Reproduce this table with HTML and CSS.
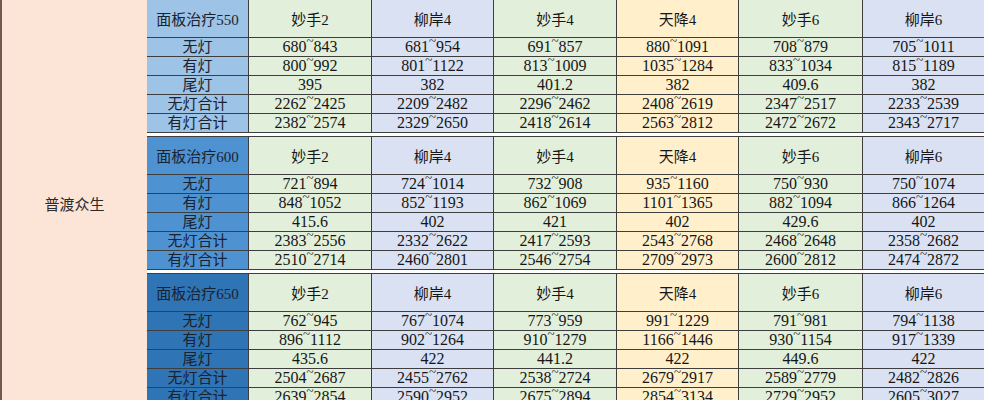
FILE: index.html
```html
<!DOCTYPE html>
<html lang="zh-CN">
<head>
<meta charset="utf-8">
<title>普渡众生</title>
<link rel="stylesheet" href="styles.css">
</head>
<body>
<div class="sheet">
  <div class="group">普渡众生</div>
  <div class="blocks">
    <div class="block b1">
      <div class="lab hd">面板治疗550</div>
      <div class="c g hd">妙手2</div><div class="c v hd">柳岸4</div><div class="c g hd">妙手4</div><div class="c y hd">天降4</div><div class="c g hd">妙手6</div><div class="c v hd">柳岸6</div>
      <div class="lab">无灯</div>
      <div class="c g">680<span class="t">~</span>843</div><div class="c v">681<span class="t">~</span>954</div><div class="c g">691<span class="t">~</span>857</div><div class="c y">880<span class="t">~</span>1091</div><div class="c g">708<span class="t">~</span>879</div><div class="c v">705<span class="t">~</span>1011</div>
      <div class="lab">有灯</div>
      <div class="c g">800<span class="t">~</span>992</div><div class="c v">801<span class="t">~</span>1122</div><div class="c g">813<span class="t">~</span>1009</div><div class="c y">1035<span class="t">~</span>1284</div><div class="c g">833<span class="t">~</span>1034</div><div class="c v">815<span class="t">~</span>1189</div>
      <div class="lab">尾灯</div>
      <div class="c g">395</div><div class="c v">382</div><div class="c g">401.2</div><div class="c y">382</div><div class="c g">409.6</div><div class="c v">382</div>
      <div class="lab">无灯合计</div>
      <div class="c g">2262<span class="t">~</span>2425</div><div class="c v">2209<span class="t">~</span>2482</div><div class="c g">2296<span class="t">~</span>2462</div><div class="c y">2408<span class="t">~</span>2619</div><div class="c g">2347<span class="t">~</span>2517</div><div class="c v">2233<span class="t">~</span>2539</div>
      <div class="lab">有灯合计</div>
      <div class="c g">2382<span class="t">~</span>2574</div><div class="c v">2329<span class="t">~</span>2650</div><div class="c g">2418<span class="t">~</span>2614</div><div class="c y">2563<span class="t">~</span>2812</div><div class="c g">2472<span class="t">~</span>2672</div><div class="c v">2343<span class="t">~</span>2717</div>
    </div>
    <div class="sep"></div>
    <div class="block b2">
      <div class="lab hd">面板治疗600</div>
      <div class="c g hd">妙手2</div><div class="c v hd">柳岸4</div><div class="c g hd">妙手4</div><div class="c y hd">天降4</div><div class="c g hd">妙手6</div><div class="c v hd">柳岸6</div>
      <div class="lab">无灯</div>
      <div class="c g">721<span class="t">~</span>894</div><div class="c v">724<span class="t">~</span>1014</div><div class="c g">732<span class="t">~</span>908</div><div class="c y">935<span class="t">~</span>1160</div><div class="c g">750<span class="t">~</span>930</div><div class="c v">750<span class="t">~</span>1074</div>
      <div class="lab">有灯</div>
      <div class="c g">848<span class="t">~</span>1052</div><div class="c v">852<span class="t">~</span>1193</div><div class="c g">862<span class="t">~</span>1069</div><div class="c y">1101<span class="t">~</span>1365</div><div class="c g">882<span class="t">~</span>1094</div><div class="c v">866<span class="t">~</span>1264</div>
      <div class="lab">尾灯</div>
      <div class="c g">415.6</div><div class="c v">402</div><div class="c g">421</div><div class="c y">402</div><div class="c g">429.6</div><div class="c v">402</div>
      <div class="lab">无灯合计</div>
      <div class="c g">2383<span class="t">~</span>2556</div><div class="c v">2332<span class="t">~</span>2622</div><div class="c g">2417<span class="t">~</span>2593</div><div class="c y">2543<span class="t">~</span>2768</div><div class="c g">2468<span class="t">~</span>2648</div><div class="c v">2358<span class="t">~</span>2682</div>
      <div class="lab">有灯合计</div>
      <div class="c g">2510<span class="t">~</span>2714</div><div class="c v">2460<span class="t">~</span>2801</div><div class="c g">2546<span class="t">~</span>2754</div><div class="c y">2709<span class="t">~</span>2973</div><div class="c g">2600<span class="t">~</span>2812</div><div class="c v">2474<span class="t">~</span>2872</div>
    </div>
    <div class="sep"></div>
    <div class="block b3">
      <div class="lab hd">面板治疗650</div>
      <div class="c g hd">妙手2</div><div class="c v hd">柳岸4</div><div class="c g hd">妙手4</div><div class="c y hd">天降4</div><div class="c g hd">妙手6</div><div class="c v hd">柳岸6</div>
      <div class="lab">无灯</div>
      <div class="c g">762<span class="t">~</span>945</div><div class="c v">767<span class="t">~</span>1074</div><div class="c g">773<span class="t">~</span>959</div><div class="c y">991<span class="t">~</span>1229</div><div class="c g">791<span class="t">~</span>981</div><div class="c v">794<span class="t">~</span>1138</div>
      <div class="lab">有灯</div>
      <div class="c g">896<span class="t">~</span>1112</div><div class="c v">902<span class="t">~</span>1264</div><div class="c g">910<span class="t">~</span>1279</div><div class="c y">1166<span class="t">~</span>1446</div><div class="c g">930<span class="t">~</span>1154</div><div class="c v">917<span class="t">~</span>1339</div>
      <div class="lab">尾灯</div>
      <div class="c g">435.6</div><div class="c v">422</div><div class="c g">441.2</div><div class="c y">422</div><div class="c g">449.6</div><div class="c v">422</div>
      <div class="lab">无灯合计</div>
      <div class="c g">2504<span class="t">~</span>2687</div><div class="c v">2455<span class="t">~</span>2762</div><div class="c g">2538<span class="t">~</span>2724</div><div class="c y">2679<span class="t">~</span>2917</div><div class="c g">2589<span class="t">~</span>2779</div><div class="c v">2482<span class="t">~</span>2826</div>
      <div class="lab">有灯合计</div>
      <div class="c g">2639<span class="t">~</span>2854</div><div class="c v">2590<span class="t">~</span>2952</div><div class="c g">2675<span class="t">~</span>2894</div><div class="c y">2854<span class="t">~</span>3134</div><div class="c g">2729<span class="t">~</span>2952</div><div class="c v">2605<span class="t">~</span>3027</div>
    </div>
  </div>
</div>
</body>
</html>
```
FILE: styles.css
```css
html, body {
  margin: 0;
  padding: 0;
  background: #ffffff;
}
body {
  width: 984px;
  height: 400px;
  overflow: hidden;
  font-family: "Liberation Serif", "Noto Sans CJK SC", serif;
  color: #161616;
}
.sheet {
  display: flex;
  width: 984px;
}
.group {
  width: 145px;
  border-left: 2px solid #6f5b4f;
  background: #fce4d6;
  display: flex;
  align-items: center;
  justify-content: center;
  font-size: 15px;
  color: #2a2a2a;
}
.blocks {
  display: flex;
  flex-direction: column;
  width: 837px;
}
.sep {
  height: 3px;
  background: #ffffff;
}
.block {
  display: grid;
  grid-template-columns: 101px 122px 121px 122px 121px 123px 121px;
  grid-template-rows: 37px repeat(5, 18px);
  gap: 1px;
  padding-bottom: 1px;
  background: #3e3e3e;
}
.b2, .b3 {
  padding-top: 1px;
}
.lab, .c {
  display: flex;
  align-items: center;
  justify-content: center;
  white-space: nowrap;
  line-height: 18px;
}
.lab {
  font-size: 15px;
  color: #1a2230;
}
.c {
  font-size: 16px;
}
.hd {
  font-size: 15px;
  padding-top: 2px;
}
.b1 .lab { background: #9dc3e6; }
.b2 .lab { background: #4f92d2; }
.b3 .lab { background: #2f74b5; }
.g { background: #e2efda; }
.v { background: #d9e1f2; }
.y { background: #fff0cb; }
.t {
  display: inline-block;
  font-size: 13px;
  line-height: 0;
  transform: translateY(-6px);
}
```
